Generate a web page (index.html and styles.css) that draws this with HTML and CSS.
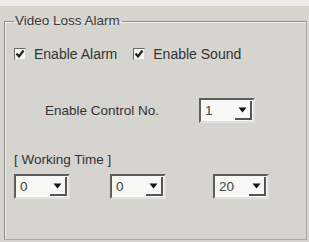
FILE: index.html
```html
<!DOCTYPE html>
<html>
<head>
<meta charset="utf-8">
<link rel="stylesheet" href="styles.css">
</head>
<body>
<div class="topstrip"></div>
<fieldset class="group">
  <legend class="legend">Video Loss Alarm</legend>
  <div class="checks">
    <label class="check">
      <span class="box"><svg width="10" height="10" viewBox="0 0 10 10"><path d="M1.5 4.5 L4 7.5 L8.5 1.5" fill="none" stroke="#222" stroke-width="2.2"/></svg></span>
      <span>Enable Alarm</span>
    </label>
    <label class="check">
      <span class="box"><svg width="10" height="10" viewBox="0 0 10 10"><path d="M1.5 4.5 L4 7.5 L8.5 1.5" fill="none" stroke="#222" stroke-width="2.2"/></svg></span>
      <span>Enable Sound</span>
    </label>
  </div>
  <div class="control">
    <span class="label">Enable Control No.</span>
    <div class="combo"><span class="val">1</span><span class="btn"><svg width="9" height="6" viewBox="0 0 9 6"><path d="M0.5 0.5 L8.5 0.5 L4.5 5.5 Z" fill="#111"/></svg></span></div>
  </div>
  <div class="wt">[ Working Time ]</div>
  <div class="times">
    <div class="combo"><span class="val">0</span><span class="btn"><svg width="9" height="6" viewBox="0 0 9 6"><path d="M0.5 0.5 L8.5 0.5 L4.5 5.5 Z" fill="#111"/></svg></span></div>
    <div class="combo"><span class="val">0</span><span class="btn"><svg width="9" height="6" viewBox="0 0 9 6"><path d="M0.5 0.5 L8.5 0.5 L4.5 5.5 Z" fill="#111"/></svg></span></div>
    <div class="combo wide"><span class="val">20</span><span class="btn"><svg width="9" height="6" viewBox="0 0 9 6"><path d="M0.5 0.5 L8.5 0.5 L4.5 5.5 Z" fill="#111"/></svg></span></div>
  </div>
</fieldset>
</body>
</html>
```
FILE: styles.css
```css
html, body {
  margin: 0;
  padding: 0;
  background: #d6d4ce;
  width: 309px;
  height: 242px;
  overflow: hidden;
  font-family: "Liberation Sans", Arial, sans-serif;
  font-size: 13.5px;
  color: #333;
}
.topstrip {
  height: 6px;
  background: #edeceb;
}
.group {
  margin: 7px 2px 0 4px;
  padding: 0 0 0 9px;
  height: 227px;
  box-sizing: border-box;
  border: 1px solid #8e8d8a;
  border-right-color: #a9a8a4;
  border-bottom-color: #a9a8a4;
  box-shadow: inset 1px 1px 0 #f2f1ee;
  display: flex;
  flex-direction: column;
}
.legend {
  padding: 0 2px 0 1px;
  margin-left: 0;
  line-height: 16px;
  font-size: 13.5px;
  color: #3a3a3a;
}
.checks {
  display: flex;
  gap: 16px;
  margin-top: 17px;
  font-size: 14px;
}
.check {
  display: flex;
  align-items: center;
  gap: 8px;
  line-height: 16px;
}
.box {
  width: 12px;
  height: 12px;
  box-sizing: border-box;
  background: #f6f6f3;
  border: 1px solid #6a6a66;
  border-right-color: #d8d7d2;
  border-bottom-color: #d8d7d2;
  display: flex;
  align-items: center;
  justify-content: center;
}
.control {
  display: flex;
  align-items: center;
  margin-top: 36px;
  padding-left: 31px;
  gap: 40px;
}
.combo {
  width: 56px;
  height: 25px;
  box-sizing: border-box;
  background: #f7f7f5;
  border: 2px solid #5e5e5b;
  border-right-color: #e2e1dc;
  border-bottom-color: #e2e1dc;
  display: flex;
  align-items: center;
  justify-content: space-between;
}
.val {
  padding-left: 4px;
  color: #444;
}
.btn {
  width: 17px;
  height: 19px;
  margin-right: 1px;
  display: flex;
  align-items: center;
  justify-content: center;
  border-right: 2px solid #555;
  border-bottom: 2px solid #555;
  box-sizing: border-box;
}
.wt {
  margin-top: 29px;
  line-height: 16px;
}
.times {
  display: flex;
  gap: 40px;
  margin-top: 6px;
}
.times .wide {
  margin-left: 7px;
}
```
